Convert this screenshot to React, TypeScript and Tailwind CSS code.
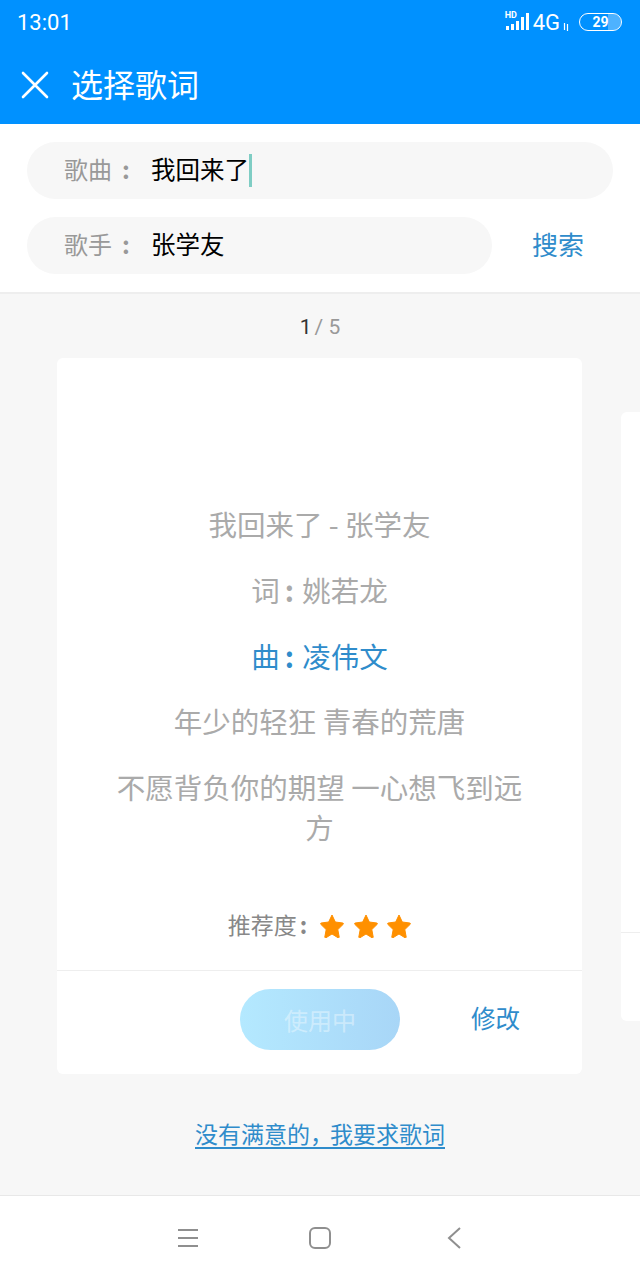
import type { ReactNode } from 'react'

const cjk = '"Noto Sans CJK SC", "Noto Sans", sans-serif'

function Star() {
  return (
    <svg width="24" height="24" viewBox="0 0 24 24" className="block">
      <path
        d="M12 1l3.3 7 7.5 1c.6.1.9.8.4 1.3l-5.4 5.3 1.4 7.4c.1.6-.6 1.1-1.1.8L12 20l-6.1 3.8c-.5.3-1.2-.2-1.1-.8l1.4-7.4-5.4-5.3c-.5-.5-.2-1.2.4-1.3l7.5-1L12 1z"
        fill="#ff9000"
        stroke="#ff9000"
        strokeWidth="1"
        strokeLinejoin="round"
      />
    </svg>
  )
}

function SearchField({ label, children, className }: { label: string; children: ReactNode; className: string }) {
  return (
    <div className={`flex h-[57px] items-center rounded-full bg-[#f7f7f7] pb-[3px] pl-[38px] ${className}`}>
      <span className="-ml-px w-[87px] text-[24px] leading-none text-[#999999]">
        {label}
        <span className="ml-[10px] font-bold">:</span>
      </span>
      {children}
    </div>
  )
}

function StatusIcons() {
  return (
    <div className="flex items-center">
      <div className="relative h-[24px] w-[26px]">
        <span className="absolute left-0 top-0 font-['Roboto'] text-[9px] font-bold leading-[9px] text-white">HD</span>
        <svg width="26" height="24" viewBox="0 0 26 24" className="absolute left-0 top-0">
          <rect x="1" y="15" width="3" height="4" fill="#fff" />
          <rect x="6" y="13" width="3" height="6" fill="#fff" />
          <rect x="11" y="10" width="3" height="9" fill="#fff" />
          <rect x="16" y="6" width="3" height="13" fill="#fff" />
          <rect x="21" y="2" width="3" height="17" fill="#fff" />
        </svg>
      </div>
      <span className="ml-[2px] font-['Roboto'] text-[22px] leading-none text-white">4G</span>
      <svg width="6" height="8" viewBox="0 0 6 8" className="ml-[3px] mt-[7px]">
        <path d="M1.5 0v7M4.5 1v7" stroke="#fff" strokeWidth="1.2" />
      </svg>
      <div className="relative mb-[2px] ml-[10px] flex h-[18px] w-[43px] items-center justify-center overflow-hidden rounded-full border-[1.5px] border-white">
        <div className="absolute inset-y-0 right-0 w-[13px] bg-white/30" />
        <span className="relative font-['Roboto'] text-[14px] font-bold leading-none text-white">29</span>
      </div>
    </div>
  )
}

export default function App() {
  return (
    <div className="flex h-[1280px] w-[640px] flex-col overflow-hidden bg-[#f7f7f7]" style={{ fontFamily: cjk }}>
      <header className="h-[124px] shrink-0 bg-[#0091ff] text-white">
        <div className="flex h-[46px] items-center justify-between pl-[17px] pr-[18px]">
          <span className="font-['Roboto'] text-[22px] leading-none">13:01</span>
          <StatusIcons />
        </div>
        <div className="flex h-[78px] items-center pl-[21px]">
          <svg width="28" height="28" viewBox="0 0 28 28">
            <path d="M2 2l24 24M26 2L2 26" stroke="#fff" strokeWidth="2.6" strokeLinecap="round" />
          </svg>
          <h1 className="ml-[22px] pb-[4px] text-[32px] font-normal leading-none">选择歌词</h1>
        </div>
      </header>

      <section className="h-[170px] shrink-0 border-b-2 border-[#eeeeee] bg-white px-[27px] pt-[18px]">
        <SearchField label="歌曲" className="w-[586px]">
          <span className="text-[24.5px] leading-none text-black">我回来了</span>
          <span className="mt-[3px] h-[33px] w-[3px] bg-[#7fcdc4]" />
        </SearchField>
        <div className="mt-[18px] flex items-center">
          <SearchField label="歌手" className="w-[465px]">
            <span className="text-[24.5px] leading-none text-black">张学友</span>
          </SearchField>
          <span className="ml-[40px] pb-[4px] text-[26px] leading-none text-[#2f8ccb]">搜索</span>
        </div>
      </section>

      <div className="flex h-[64px] shrink-0 items-center justify-center pt-[2px] font-['Roboto'] text-[21px] leading-none text-[#999999]">
        <span className="text-[#333333]">1</span>
        <span className="ml-[3px]">/ 5</span>
      </div>

      <div className="flex items-center gap-[39px] overflow-hidden pl-[57px]">
        <article className="h-[716px] w-[525px] shrink-0 rounded-[6px] bg-white">
          <div className="h-[613px] border-b border-[#eeeeee] px-[56px] pt-[146px] text-center text-[28.5px] leading-[40px] text-[#aaaaaa]">
            <p>我回来了 - 张学友</p>
            <p className="mt-[26px]">词<span className="ml-[5px] mr-[8px] font-bold">:</span>姚若龙</p>
            <p className="mt-[26px] text-[#2f8ccb]">曲<span className="ml-[5px] mr-[8px] font-bold">:</span>凌伟文</p>
            <p className="mt-[25px]">年少的轻狂 青春的荒唐</p>
            <p className="mt-[26px]">不愿背负你的期望 一心想飞到远方</p>
            <div className="mt-[66px] flex items-center justify-center">
              <span className="pb-[3px] text-[23px] leading-none text-[#888888]">推荐度<span className="ml-[3px] font-bold">:</span></span>
              <div className="ml-[13px] flex gap-[9.5px]">
                <Star />
                <Star />
                <Star />
              </div>
            </div>
          </div>
          <div className="flex items-center justify-end pr-[62px] pt-[18px]">
            <button className="h-[61px] w-[160px] rounded-full bg-gradient-to-r from-[#b4e9ff] to-[#a8d6f7] text-[24px] text-white/40">
              使用中
            </button>
            <span className="ml-[71px] pb-[2px] text-[24.5px] leading-none text-[#2f8ccb]">修改</span>
          </div>
        </article>
        <aside className="h-[609px] w-[40px] shrink-0 rounded-[6px] bg-white">
          <div className="h-[521px] border-b border-[#eeeeee]" />
        </aside>
      </div>

      <div className="flex flex-1 items-center justify-center pb-[4px]">
        <a className="text-[23px] leading-[30px] text-[#2f8ccb] underline underline-offset-4 [text-decoration-skip-ink:none]">
          没有满意的<span className="tracking-[-3px]">，</span>我要求歌词
        </a>
      </div>

      <nav className="relative flex h-[85px] shrink-0 items-center border-t border-[#e8e8e8] bg-white pl-[177px]">
        <svg width="22" height="20" viewBox="0 0 22 20">
          <path d="M1 2h20M1 10h20M1 18h20" stroke="#8f8f8f" strokeWidth="2" />
        </svg>
        <svg width="24" height="24" viewBox="0 0 24 24" className="ml-[109px]">
          <rect x="2" y="2" width="20" height="20" rx="5" fill="none" stroke="#8f8f8f" strokeWidth="2" />
        </svg>
        <svg width="14" height="24" viewBox="0 0 14 24" className="ml-[115px]">
          <path d="M13 2L2 12l11 10" fill="none" stroke="#8f8f8f" strokeWidth="2" />
        </svg>
      </nav>
    </div>
  )
}
